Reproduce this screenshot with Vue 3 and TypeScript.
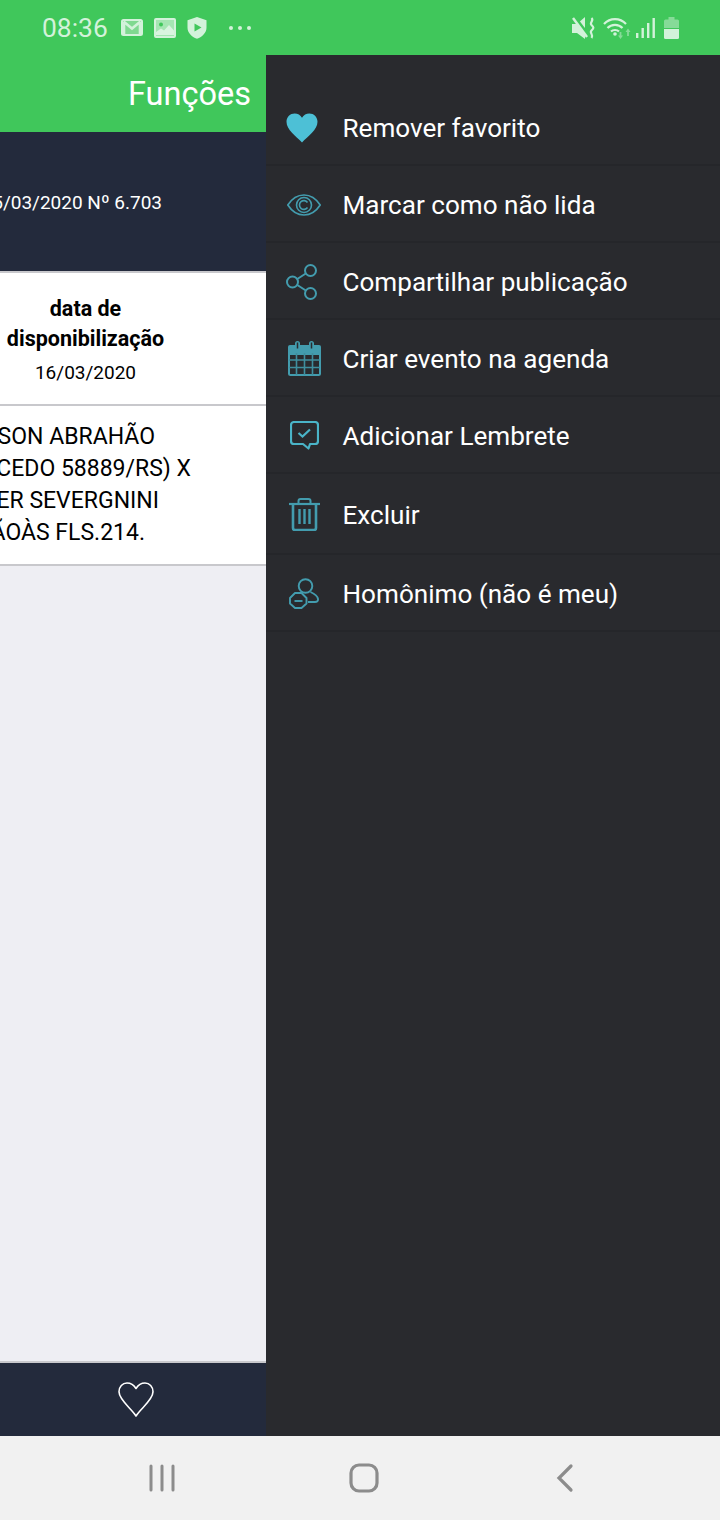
<template>
  <div class="screen">
    <header class="status-bar">
      <div class="status-left">
        <span class="time">08:36</span>
        <svg class="st-icon" width="22" height="17" viewBox="0 0 22 17">
          <rect x="1" y="1" width="20" height="15" rx="1.500" fill="#7fd990" stroke="#d3f2da" stroke-width="2" />
          <path d="M2.500 2.500L11 9.500l8.500-7M3 3v12M19 3v12" fill="none" stroke="#d3f2da" stroke-width="2.600" />
        </svg>
        <svg class="st-icon" width="22" height="20" viewBox="0 0 22 20">
          <rect x="1" y="1" width="20" height="18" rx="1" fill="#a5e6b2" stroke="#d3f2da" stroke-width="2" />
          <circle cx="7" cy="6.500" r="2" fill="#40c75b" />
          <path d="M2 17v-3l5-3.500 3 2 5-5.500 5 5.500V17z" fill="#d9f4df" />
        </svg>
        <svg class="st-icon" width="20" height="22" viewBox="0 0 20 22">
          <path d="M10 0l9.500 3.200v7.300c0 5.200-4 9.300-9.500 11.200C4.500 19.800.5 15.700.5 10.500V3.200zM7.500 6.500v8l7-4z" fill="#d3f2da" fill-rule="evenodd" />
        </svg>
        <span class="dots"><i /><i /><i /></span>
      </div>
      <div class="status-right">
        <svg class="ic-mute" width="24" height="22" viewBox="0 0 24 22">
          <path d="M0 7h5l8-7v22l-8-6H0z" fill="#d3f2da" />
          <path d="M2 -1l15 20" stroke="#40c75b" stroke-width="3" />
          <path d="M1 1l14 19" stroke="#d3f2da" stroke-width="2.500" />
          <path d="M19.500 1c3 2.500-2.500 4.500 0 7 2.500 2.500 2.500 3 0 5.500-2.500 2.500 2.500 4 0 7.500" fill="none" stroke="#d3f2da" stroke-width="2.200" />
        </svg>
        <svg class="ic-wifi" width="28" height="22" viewBox="0 0 28 22">
          <path d="M1 7c6-6.500 16-6.500 22 0M4.500 11c4-4.300 11-4.300 15 0M8 14.500c2-2 6-2 8 0" fill="none" stroke="#d3f2da" stroke-width="2.200" />
          <circle cx="12" cy="17" r="1.800" fill="#d3f2da" />
          <path d="M17.500 15v4M25 14v5" stroke="#86db98" stroke-width="1.800" />
          <path d="M15 18.500l2.500 3.500 2.500-3.500zM22.500 15l2.500-3.500 2.500 3.500z" fill="#86db98" />
        </svg>
        <svg class="ic-signal" width="19" height="20" viewBox="0 0 19 20">
          <rect x="0" y="15" width="2.400" height="5" fill="#d3f2da" />
          <rect x="5.500" y="10" width="2.400" height="10" fill="#d3f2da" />
          <rect x="11" y="5" width="2.400" height="15" fill="#d3f2da" />
          <rect x="16.500" y="0" width="2.400" height="20" fill="#d3f2da" />
        </svg>
        <svg class="ic-battery" width="15" height="22" viewBox="0 0 15 22">
          <path d="M4.500 0h6v2.500h3A1.500 1.500 0 0 1 15 4v7H0V4a1.500 1.500 0 0 1 1.500-1.500h3z" fill="#86db98" />
          <path d="M0 12h15v8.500a1.500 1.500 0 0 1-1.500 1.500h-12A1.500 1.500 0 0 1 0 20.500z" fill="#d3f2da" />
        </svg>
      </div>
    </header>

    <main class="content">
      <section class="behind">
        <div class="toolbar">Funções</div>
        <div class="pub-header"><span>5/03/2020 Nº 6.703</span></div>
        <div class="dates">
          <strong>data de<br />disponibilização</strong>
          <span>16/03/2020</span>
        </div>
        <div class="pub-text">
          <div class="line l1"><span>SON ABRAHÃO</span></div>
          <div class="line l2"><span>CEDO 58889/RS) X</span></div>
          <div class="line l3"><span>ER SEVERGNINI</span></div>
          <div class="line l4"><span>ÃOÀS FLS.214.</span></div>
        </div>
        <div class="spacer" />
        <div class="bottom-bar">
          <svg width="36" height="35" viewBox="0 0 36 35">
            <path d="M18 34C13.500 26.500 1 18 1 9.800 1 4.800 4.500 1 9 1c4 0 7 2.200 9 5.500C20 3.200 23 1 27 1c4.500 0 8 3.800 8 8.800C35 18 22.500 26.500 18 34z" fill="none" stroke="#fff" stroke-width="1.600" stroke-linejoin="round" />
          </svg>
        </div>
      </section>

      <aside class="menu">
        <div v-for="item in items" :key="item.label" class="menu-item" :class="item.cls">
          <span class="menu-icon">
            <svg v-if="item.icon === 'heart'" class="nudge" width="32" height="30" viewBox="0 0 32 30">
              <path d="M16 29.500C10 23 .5 17 .5 8.800.5 3.800 4.300.5 8.600.5c3.200 0 5.800 1.500 7.400 4.300C17.600 2 20.200.5 23.400.5c4.300 0 8.100 3.300 8.100 8.300C31.500 17 22 23 16 29.500z" fill="#4dc0d6" />
            </svg>
            <svg v-else-if="item.icon === 'eye'" width="34" height="22" viewBox="0 0 34 22">
              <path d="M.8 11C5 4.500 10.500 1 17 1s12 3.500 16.200 10C29 17.500 23.500 21 17 21S5 17.500.8 11z" fill="none" stroke="#439cae" stroke-width="1.700" />
              <circle cx="17" cy="11" r="7.500" fill="none" stroke="#439cae" stroke-width="1.600" />
              <path d="M20.500 8.500a4.400 4.400 0 1 0 0 5" fill="none" stroke="#439cae" stroke-width="1.600" />
            </svg>
            <svg v-else-if="item.icon === 'share'" class="nudge" width="32" height="36" viewBox="0 0 32 36">
              <circle cx="24.500" cy="6.500" r="5.500" fill="none" stroke="#439cae" stroke-width="2" />
              <circle cx="6.500" cy="18" r="5.500" fill="none" stroke="#439cae" stroke-width="2" />
              <circle cx="24.500" cy="29.500" r="5.500" fill="none" stroke="#439cae" stroke-width="2" />
              <path d="M11.300 15l8.500-5.500M11.300 21l8.500 5.500" stroke="#439cae" stroke-width="2" />
            </svg>
            <svg v-else-if="item.icon === 'calendar'" width="33" height="35" viewBox="0 0 33 35">
              <path d="M2 4h5V2.500a2.500 2.500 0 0 1 5 0V4h9V2.500a2.500 2.500 0 0 1 5 0V4h5a2 2 0 0 1 2 2v8H0V6a2 2 0 0 1 2-2z" fill="#439cae" />
              <rect x="1" y="6" width="31" height="28" rx="1.500" fill="none" stroke="#439cae" stroke-width="2" />
              <path d="M1 19h31M1 26.500h31M8.500 12v22M16.500 12v22M24.500 12v22" stroke="#3f8e9e" stroke-width="1.600" />
              <path d="M9.500 1.500v6M23.500 1.500v6" stroke="#2a2b2f" stroke-width="1.500" />
            </svg>
            <svg v-else-if="item.icon === 'reminder'" width="29" height="29" viewBox="0 0 29 29">
              <path d="M4 1h21a3 3 0 0 1 3 3v16a3 3 0 0 1-3 3h-5l-1.500 4.500L13 23H4a3 3 0 0 1-3-3V4a3 3 0 0 1 3-3z" fill="none" stroke="#4ab4c8" stroke-width="2.200" stroke-linejoin="round" />
              <path d="M8.500 12l4 3.500 7.500-7" fill="none" stroke="#4ab4c8" stroke-width="2.200" />
            </svg>
            <svg v-else-if="item.icon === 'trash'" width="31" height="33" viewBox="0 0 31 33">
              <path d="M0 6h31" stroke="#439cae" stroke-width="2.200" />
              <path d="M9.500 5V3a2 2 0 0 1 2-2h8a2 2 0 0 1 2 2v2" fill="none" stroke="#439cae" stroke-width="2" />
              <path d="M4 6v24a2 2 0 0 0 2 2h19a2 2 0 0 0 2-2V6" fill="none" stroke="#439cae" stroke-width="2.600" />
              <path d="M10.500 11v15M15.500 11v15M20.500 11v15" stroke="#439cae" stroke-width="2.400" />
            </svg>
            <svg v-else width="30" height="31" viewBox="0 0 30 31">
              <circle cx="16.500" cy="8" r="6.800" fill="none" stroke="#439cae" stroke-width="1.900" />
              <path d="M21.500 14c3.500 1.500 7 4 7.500 7 .3 2-1 3-3 3h-7" fill="none" stroke="#439cae" stroke-width="1.900" />
              <path d="M6 15h6.500l5 5v5.500l-5 4.500H6l-5-4.500V20z" fill="none" stroke="#439cae" stroke-width="1.900" stroke-linejoin="round" />
              <path d="M5.500 23h8" stroke="#439cae" stroke-width="1.900" />
            </svg>
          </span>
          <span class="menu-label">{{ item.label }}</span>
        </div>
      </aside>
    </main>

    <nav class="nav-bar">
      <svg width="28" height="28" viewBox="0 0 28 28">
        <path d="M3 2v24M14 2v24M25 2v24" stroke="#8c8c8c" stroke-width="3" stroke-linecap="round" />
      </svg>
      <svg class="nav-home" width="30" height="30" viewBox="0 0 30 30">
        <rect x="2" y="2" width="26" height="26" rx="8" fill="none" stroke="#8c8c8c" stroke-width="3.200" />
      </svg>
      <svg width="20" height="30" viewBox="0 0 20 30">
        <path d="M16 3L4 15l12 12" fill="none" stroke="#8c8c8c" stroke-width="3.200" stroke-linecap="round" />
      </svg>
    </nav>
  </div>
</template>

<script setup lang="ts">
interface MenuItem {
  label: string
  icon: string
  cls?: string
}

const items: MenuItem[] = [
  { label: 'Remover favorito', icon: 'heart' },
  { label: 'Marcar como não lida', icon: 'eye' },
  { label: 'Compartilhar publicação', icon: 'share' },
  { label: 'Criar evento na agenda', icon: 'calendar' },
  { label: 'Adicionar Lembrete', icon: 'reminder' },
  { label: 'Excluir', icon: 'trash', cls: 'tall' },
  { label: 'Homônimo (não é meu)', icon: 'person' }
]
</script>

<style>
html,
body {
  margin: 0;
  background: #f1f1f1;
}
</style>

<style scoped>
.screen {
  width: 720px;
  height: 1520px;
  display: flex;
  flex-direction: column;
  overflow: hidden;
  font-family: Roboto, "Liberation Sans", sans-serif;
}

.status-bar {
  height: 55px;
  flex: none;
  background: #40c75b;
  display: flex;
  justify-content: space-between;
  align-items: center;
  padding: 0 41px 0 42px;
  color: #d3f2da;
}

.status-left,
.status-right {
  display: flex;
  align-items: center;
}

.time {
  font-size: 26.4px;
  width: 79px;
}

.st-icon {
  margin-right: 11px;
}

.dots {
  display: flex;
  gap: 5px;
  margin-left: 11px;
}

.dots i {
  width: 4px;
  height: 4px;
  border-radius: 50%;
  background: #d3f2da;
}

.ic-wifi {
  margin-left: 7px;
}

.ic-signal {
  margin-left: 5px;
}

.ic-battery {
  margin-left: 9px;
}

.content {
  flex: 1;
  display: flex;
  min-height: 0;
}

.behind {
  width: 266px;
  flex: none;
  display: flex;
  flex-direction: column;
  background: #eeeef3;
  overflow: hidden;
}

.toolbar {
  height: 77px;
  flex: none;
  background: #40c75b;
  color: #fff;
  font-size: 32.500px;
  display: flex;
  align-items: center;
  justify-content: flex-end;
  padding-right: 15px;
}

.pub-header {
  height: 138px;
  padding-top: 1px;
  flex: none;
  background: #232a3c;
  color: #fff;
  font-size: 19px;
  display: flex;
  align-items: center;
  justify-content: flex-end;
  padding-right: 104px;
  white-space: nowrap;
}

.dates {
  height: 130px;
  padding-top: 1px;
  flex: none;
  background: #fff;
  border-top: 2px solid #c8c8cc;
  border-bottom: 2px solid #c8c8cc;
  display: flex;
  flex-direction: column;
  align-items: center;
  justify-content: center;
  text-align: center;
  color: #000;
  width: 171px;
  padding-right: 95px;
}

.dates strong {
  font-size: 21.500px;
  line-height: 30px;
  white-space: nowrap;
}

.dates span {
  font-size: 19px;
  margin-top: 7px;
}

.pub-text {
  background: #fff;
  border-bottom: 2px solid #c8c8cc;
  padding: 15px 0;
  font-size: 23px;
  line-height: 32px;
  color: #000;
  flex: none;
}

.line {
  display: flex;
  justify-content: flex-end;
  white-space: nowrap;
}

.l1 { width: 155px; }
.l2 { width: 191px; }
.l3 { width: 159px; }
.l4 { width: 145px; }

.spacer {
  flex: 1;
}

.bottom-bar {
  height: 73px;
  flex: none;
  background: #232a3c;
  border-top: 2px solid #c8c8cc;
  display: flex;
  align-items: center;
  justify-content: center;
  padding-left: 5px;
}

.menu {
  flex: 1;
  background: #292a2e;
  padding-top: 34px;
}

.menu-item {
  height: 73px;
  padding-top: 2px;
  border-bottom: 2px solid #25262a;
  display: flex;
  align-items: center;
  color: #fff;
  font-size: 26.100px;
}

.menu-item.tall {
  height: 77px;
}

.menu-icon {
  width: 76.500px;
  flex: none;
  display: flex;
  justify-content: center;
}

.nudge {
  margin-right: 4px;
}

.nav-bar {
  height: 84px;
  flex: none;
  background: #f1f1f1;
  display: flex;
  align-items: center;
  justify-content: space-between;
  padding: 0 145px 0 148px;
}

.nav-home {
  margin-right: 3px;
}
</style>
